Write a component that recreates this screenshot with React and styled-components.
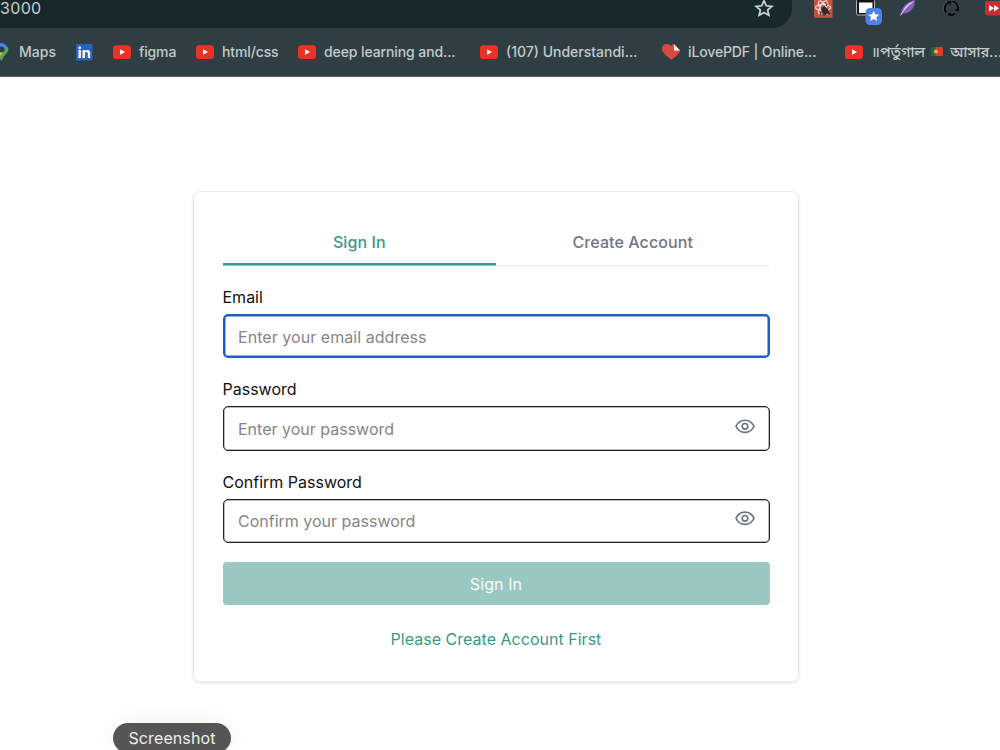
import React, { useState } from "react"
import styled, { createGlobalStyle } from "styled-components"

const GlobalStyle = createGlobalStyle `
	* {
		box-sizing: border-box;
	}
	body {
		margin: 0;
		background: #ffffff;
		font-family: Inter, "Noto Sans", "Noto Sans Bengali", sans-serif;
	}
`

const Page = styled.div `
	width: 1000px;
	height: 750px;
	overflow: hidden;
	display: flex;
	flex-direction: column;
	position: relative;
`

/* browser chrome */

const Toolbar = styled.header `
	flex: none;
	height: 28px;
	display: flex;
	align-items: flex-start;
	background: #2e3e43;
`

const AddressBar = styled.div `
	flex: none;
	width: 792px;
	height: 28px;
	padding-right: 18px;
	display: flex;
	justify-content: space-between;
	background: #18292d;
	border-bottom-right-radius: 20px;
	color: #c9cdce;
	font-size: 16px;
	line-height: 17px;
	letter-spacing: 0.35px;
`

const StarIcon = styled.svg `
	width: 20px;
	height: 18px;
`

const Extensions = styled.div `
	display: flex;
	padding-left: 21px;
`

const ExtensionIcon = styled.svg `
	flex: none;
	width: ${props => props.$width || 43}px;
	height: 28px;
`

const Bookmarks = styled.nav `
	flex: none;
	height: 49px;
	display: flex;
	align-items: center;
	background: #2e3e43;
	border-bottom: 1px solid #56625f;
	padding-bottom: 1px;
	margin-left: -9px;
`

const Bookmark = styled.a `
	flex: none;
	width: ${props => props.$width}px;
	height: 24px;
	display: flex;
	align-items: center;
	gap: 8px;
	color: #c5cacb;
	font-size: ${props => props.$size || 14}px;
	font-weight: 500;
	letter-spacing: ${props => props.$spacing || 0}px;
	white-space: pre;
`

const BookmarkIcon = styled.svg `
	flex: none;
	width: ${props => props.$width || 18}px;
	height: 18px;
`

const Flag = styled.svg `
	width: 12px;
	height: 9px;
	margin: 0 7px 1px 6px;
`

/* sign in card */

const Main = styled.main `
	padding: 114px 0 0 193px;
`

const Card = styled.section `
	width: 606px;
	height: 491px;
	padding: 27px 28.5px 0;
	border: 1px solid #e9eaeb;
	border-radius: 7px;
	box-shadow: 0 1px 3px rgba(0, 0, 0, 0.13);
`

const Tabs = styled.div `
	display: flex;
	height: 47px;
	border-bottom: 1px solid #e5e7eb;
`

const Tab = styled.button `
	flex: 1;
	height: 46px;
	padding: 1px 0 0;
	background: none;
	border: 0;
	border-bottom: 2px solid ${props => props.$active ? "#379a8a" : "transparent"};
	box-shadow: ${props => props.$active ? "0 0.5px 0 #379a8a" : "none"};
	color: ${props => props.$active ? "#379a8a" : "#6f7585"};
	font: 500 16px Inter, sans-serif;
	letter-spacing: 0.08px;
`

const Form = styled.form `
	display: flex;
	flex-direction: column;
`

const Field = styled.div `
	display: flex;
	flex-direction: column;
	height: 92.4px;
	padding-top: 19px;
`

const Label = styled.label `
	height: 29px;
	line-height: 24px;
	font-size: 16px;
	color: #111111;
`

const InputBox = styled.div `
	height: 45px;
	display: flex;
	align-items: center;
	padding: 0 14px 0 ${props => props.$focused ? 13.5 : 14.5}px;
	border: ${props => props.$focused ? "2px solid #245cc6" : "1px solid #222222"};
	border-radius: 5px;
	box-shadow: inset 0 0 0 0.5px ${props => props.$focused ? "#245cc6" : "#777777"};
`

const Input = styled.input `
	flex: 1;
	min-width: 0;
	padding: 1px 0 0;
	border: 0;
	outline: 0;
	background: none;
	font: 400 16px Inter, sans-serif;
	letter-spacing: ${props => props.$spacing || 0}px;
	&::placeholder {
		color: #858585;
		opacity: 1;
	}
`

const EyeButton = styled.button `
	width: 20px;
	height: 20px;
	padding: 0;
	margin-bottom: 5px;
	border: 0;
	background: none;
	svg {
		display: block;
	}
`

const SubmitButton = styled.button `
	height: 43px;
	margin-top: 19px;
	border: 0;
	border-radius: 4px;
	background: #9ac7c1;
	color: #f7fbfa;
	font: 400 16px Inter, sans-serif;
	letter-spacing: 0.1px;
`

const FormLink = styled.a `
	align-self: center;
	margin-top: 22px;
	line-height: 24px;
	font-size: 16px;
	color: #379a8a;
	letter-spacing: 0.02px;
`

/* floats over the page */
const Tooltip = styled.div `
	position: absolute;
	left: 113px;
	top: 722.5px;
	width: 118px;
	height: 30px;
	border-radius: 15px;
	background: #555555;
	box-shadow: 0 0 30px rgba(0, 0, 0, 0.06);
	color: #eeeeee;
	font-size: 16px;
	line-height: 30px;
	letter-spacing: 0.1px;
	text-align: center;
`

function YoutubeIcon() {
	return (
		<BookmarkIcon viewBox="0 0 18 18">
			<rect x="0" y="2.3" width="18" height="13.6" rx="3.2" fill="#eb3223" />
			<path d="M7 6.2v5.8l5-2.9z" fill="#fff" />
		</BookmarkIcon>
	)
}

function MapsIcon() {
	return (
		<BookmarkIcon viewBox="0 0 20 18" $width={20}>
			<path d="M10 0a8 8 0 0 1 7 5L5 13C3 9 2 8 2 6a8 8 0 0 1 8-6z" fill="#4a83ed" />
			<path d="M17 4.500c1 3-.5 5-3 7.500-2 2-2 4-3.500 6C9 17 9 14 5 11.500z" fill="#50a95a" />
			<path d="M3 9.500l4-4 5 4-4.500 5z" fill="#f4bd32" />
			<circle cx="10.500" cy="6.500" r="3" fill="#2e3e43" />
		</BookmarkIcon>
	)
}

function LinkedinIcon() {
	return (
		<BookmarkIcon viewBox="0 0 17 18" $width={17}>
			<rect x="0" y="1" width="16.500" height="16.500" rx="1" fill="#2a64bc" />
			<circle cx="3.700" cy="4.800" r="1.400" fill="#fff" />
			<path d="M2.500 7.100h2.400v7.800H2.500zM6.500 7.100h2.300v1.100c.5-.8 1.300-1.300 2.400-1.300 2.300 0 3 1.500 3 3.600v4.400h-2.400V11c0-1.200-.2-2-1.300-2-1.200 0-1.600.9-1.600 2v3.900H6.500z" fill="#fff" />
		</BookmarkIcon>
	)
}

function HeartIcon() {
	return (
		<BookmarkIcon viewBox="0 0 18 18">
			<path d="M9.500 17C6 14 0 10 0 5.500 0 1 6-.5 9 3c1-1.700 2-2 3.500-2L18 7.500C17.500 11 13 14 9.500 17z" fill="#d64a3f" />
			<path d="M12 1.500v6h6z" fill="#fff" />
		</BookmarkIcon>
	)
}

function EyeIcon() {
	return (
		<svg width="20" height="20" viewBox="0 0 20 20" fill="none" stroke="#6b7285" strokeWidth="1.650">
			<path d="M1 10.300C2.600 6.500 5.500 4.200 10 4.200s7.400 2.300 9 6.100c-1.600 3.800-4.500 6.100-9 6.100s-7.400-2.300-9-6.100z" strokeLinejoin="round" />
			<circle cx="10" cy="10.300" r="2.800" />
		</svg>
	)
}

function BrowserBar() {
	return (
		<>
			<Toolbar>
				<AddressBar>
					<span>3000</span>
					<StarIcon viewBox="0 0 20 18" fill="none" stroke="#d0d5d6" strokeWidth="1.700">
						<path d="M10 .7l2.300 5.100 5.500.5-4.200 3.700 1.300 5.400L10 12.600l-4.900 2.800 1.300-5.400-4.200-3.700 5.500-.5z" />
					</StarIcon>
				</AddressBar>
				<Extensions>
					<ExtensionIcon viewBox="0 0 43 28">
						<rect x="1" y="-2" width="18.500" height="19.800" fill="#c9503d" />
						<g fill="none" stroke="#f5d5cf" strokeWidth="1.300">
							<ellipse cx="10" cy="7.500" rx="7.500" ry="3" />
							<ellipse cx="10" cy="7.500" rx="7.500" ry="3" transform="rotate(60 10 7.500)" />
							<ellipse cx="10" cy="7.500" rx="7.500" ry="3" transform="rotate(120 10 7.500)" />
						</g>
						<path d="M8 9l3-3 4 3 1 4-4 2-3-2z" fill="#352827" />
						<path d="M8 13l-1 2M11 14v2M15 12l2 2M13 6l1-2" stroke="#352827" strokeWidth="1.200" />
					</ExtensionIcon>
					<ExtensionIcon viewBox="0 0 43 28">
						<rect x="0.500" y="-1" width="18" height="16" rx="1.500" fill="#111516" stroke="#b5babb" />
						<rect x="3" y="2.500" width="13.500" height="10.500" fill="#fff" />
						<rect x="9.500" y="8" width="16.500" height="17" rx="4.500" fill="#4f7fe8" />
						<path d="M17.700 10.700l1.600 3.600 3.900.4-2.900 2.600.9 3.800-3.500-2-3.500 2 .9-3.800-2.900-2.600 3.900-.4z" fill="#fff" />
					</ExtensionIcon>
					<ExtensionIcon viewBox="0 0 43 28">
						<path d="M1.500 15.500C2 8 7 2 16 0c0 5-2 10-7 12.500-2 .8-4 .8-5 .8z" fill="#8660bd" />
						<path d="M4 11.500C5 7 9 3 14 1.500 11 4 7 8 4 11.500z" fill="#cfb9eb" />
						<path d="M1.500 15.500C5 9.500 9 5 14.500 1.500" stroke="#eee0f8" fill="none" strokeWidth=".8" />
					</ExtensionIcon>
					<ExtensionIcon viewBox="0 0 43 28">
						<g fill="none" stroke="#69757a" strokeWidth="3.300">
							<path d="M4 12.500A6.700 6.700 0 0 1 7 2.300M10.500 1.500a6.700 6.700 0 0 1 5.200 9M13.300 13.500a6.700 6.700 0 0 1-6.500.900" />
						</g>
						<g fill="none" stroke="#090b0c" strokeWidth="2.500">
							<path d="M4 12.500A6.700 6.700 0 0 1 7 2.300M10.500 1.500a6.700 6.700 0 0 1 5.200 9M13.300 13.500a6.700 6.700 0 0 1-6.500.900" />
							<path d="M5.500 1.500l3 .3-.5 3M17.500 9.500l-2.200 1.500-1.800-2M8.500 16.500l-2-2 2-1.800" strokeWidth="1.300" />
						</g>
					</ExtensionIcon>
					<ExtensionIcon viewBox="0 0 22 28" $width={22}>
						<rect x="-1" y="1" width="23" height="14.500" rx="4" fill="#c92f32" />
						<path d="M4 5l5 3.300L4 11.500zM9 5l5 3.300-5 3.200z" fill="#fff" />
					</ExtensionIcon>
				</Extensions>
			</Toolbar>
			<Bookmarks>
				<Bookmark $width={85}><MapsIcon />Maps</Bookmark>
				<Bookmark $width={37}><LinkedinIcon /></Bookmark>
				<Bookmark $width={83} $spacing={-0.15}><YoutubeIcon />figma</Bookmark>
				<Bookmark $width={102} $spacing={-0.12}><YoutubeIcon />html/css</Bookmark>
				<Bookmark $width={182} $spacing={-0.1}><YoutubeIcon />deep learning and...</Bookmark>
				<Bookmark $width={182}><YoutubeIcon />(107) Understandi...</Bookmark>
				<Bookmark $width={183} $spacing={-0.13}><HeartIcon />iLovePDF | Online...</Bookmark>
				<Bookmark $width={164} $size={14.6}>
					<YoutubeIcon />
					<span>॥পর্তুগাল<Flag viewBox="0 0 12 9">
							<rect width="12" height="9" rx="1" fill="#de3b2d" />
							<rect width="5" height="9" rx="1" fill="#276738" />
							<circle cx="5" cy="4.500" r="2" fill="#e0bd42" />
						</Flag>আসার...</span>
				</Bookmark>
			</Bookmarks>
		</>
	)
}

function PasswordField({ id, label, placeholder }) {
	const [visible, setVisible] = useState(false)
	return (
		<Field>
			<Label htmlFor={id}>{label}</Label>
			<InputBox>
				<Input id={id} type={visible ? "text" : "password"} placeholder={placeholder} />
				<EyeButton type="button" onClick={() => setVisible(!visible)}><EyeIcon /></EyeButton>
			</InputBox>
		</Field>
	)
}

function App() {
	return (
		<Page>
			<GlobalStyle />
			<BrowserBar />
			<Main>
				<Card>
					<Tabs>
						<Tab $active>Sign In</Tab>
						<Tab>Create Account</Tab>
					</Tabs>
					<Form>
						<Field>
							<Label htmlFor="email">Email</Label>
							<InputBox $focused>
								<Input id="email" placeholder="Enter your email address" $spacing={0.05} />
							</InputBox>
						</Field>
						<PasswordField id="password" label="Password" placeholder="Enter your password" />
						<PasswordField id="confirm" label="Confirm Password" placeholder="Confirm your password" />
						<SubmitButton type="button">Sign In</SubmitButton>
						<FormLink>Please Create Account First</FormLink>
					</Form>
				</Card>
			</Main>
			<Tooltip>Screenshot</Tooltip>
		</Page>
	)
}

export default App;
